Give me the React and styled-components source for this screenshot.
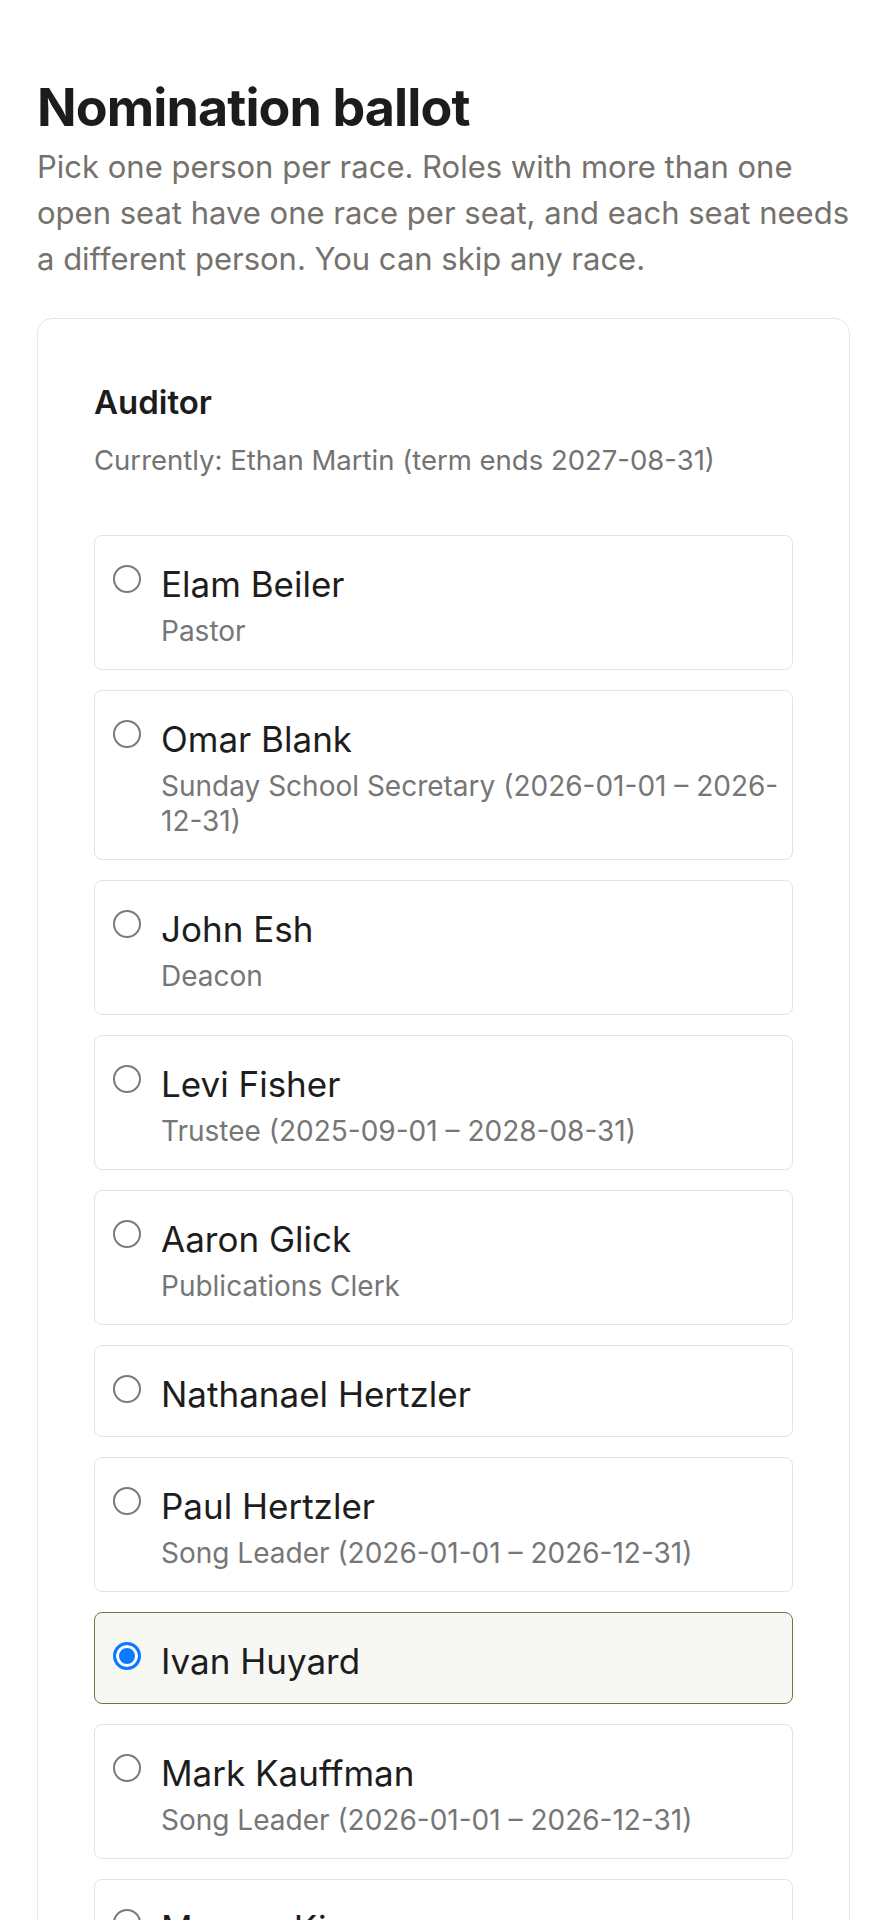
import { useState } from "react";
import styled, { createGlobalStyle } from "styled-components";

const GlobalStyle = createGlobalStyle`
  * {
    box-sizing: border-box;
  }
  body {
    margin: 0;
    background: #ffffff;
    font-family: Inter, "Noto Sans", "Liberation Sans", sans-serif;
    color: #1f1f1f;
  }
`;

const Page = styled.main`
  padding: 80px 37px 40px;
`;

const Title = styled.h1`
  margin: 0;
  font-size: 52px;
  line-height: 56px;
  font-weight: 700;
  letter-spacing: -0.9px;
  color: #1c1c1c;
`;

const Intro = styled.p`
  margin: 8px 0 36px;
  font-size: 31px;
  line-height: 46px;
  color: #75726d;
`;

const Card = styled.section`
  border: 1.5px solid #e6e6e6;
  border-radius: 15px;
  padding: 63px 56px 40px;
`;

const RaceTitle = styled.h2`
  margin: 0;
  font-size: 33px;
  line-height: 40px;
  font-weight: 600;
  color: #1c1c1c;
`;

const Current = styled.div`
  margin-top: 20px;
  font-size: 27.5px;
  line-height: 37px;
  color: #737373;
`;

const Options = styled.div`
  margin-top: 56px;
  display: flex;
  flex-direction: column;
  gap: 20px;
`;

const Option = styled.label`
  display: flex;
  align-items: flex-start;
  gap: 20px;
  padding: 26px 8px 20px 18px;
  border: 1.5px solid ${(p) => (p.$active ? "#6b7a45" : "#e3e3e3")};
  border-radius: 8px;
  background: ${(p) => (p.$active ? "#f7f7f4" : "#ffffff")};
  cursor: pointer;
`;

const Radio = styled.input.attrs({ type: "radio" })`
  appearance: none;
  flex: none;
  width: 28px;
  height: 28px;
  margin: 3px 0 0;
  border-radius: 50%;
  border: 2px solid #7a7a7a;
  background: #ffffff;

  &:checked {
    border: 3px solid #0a7aff;
    background: #0a7aff;
    box-shadow: inset 0 0 0 3px #ffffff;
  }
`;

const Text = styled.div`
  display: flex;
  flex-direction: column;
  gap: 8px;
  min-width: 0;
`;

const Name = styled.span`
  font-size: 35px;
  line-height: 44px;
  color: #1d1d1d;
`;

const Role = styled.span`
  font-size: 28px;
  line-height: 35px;
  color: #767676;
`;

// the zero-width space lets the long date range wrap after its hyphen
const candidates = [
  { id: 1, name: "Elam Beiler", role: "Pastor" },
  { id: 2, name: "Omar Blank", role: "Sunday School Secretary (2026-01-01 – 2026-\u200B12-31)" },
  { id: 3, name: "John Esh", role: "Deacon" },
  { id: 4, name: "Levi Fisher", role: "Trustee (2025-09-01 – 2028-08-31)" },
  { id: 5, name: "Aaron Glick", role: "Publications Clerk" },
  { id: 6, name: "Nathanael Hertzler" },
  { id: 7, name: "Paul Hertzler", role: "Song Leader (2026-01-01 – 2026-12-31)" },
  { id: 8, name: "Ivan Huyard" },
  { id: 9, name: "Mark Kauffman", role: "Song Leader (2026-01-01 – 2026-12-31)" },
  { id: 10, name: "Marcus King", role: "Usher" },
];

export default function App() {
  const [picked, setPicked] = useState(8);

  return (
    <>
      <GlobalStyle />
      <Page>
        <Title>Nomination ballot</Title>
        <Intro>
          Pick one person per race. Roles with more than one open seat have one
          race per seat, and each seat needs a different person. You can skip
          any race.
        </Intro>
        <Card>
          <RaceTitle>Auditor</RaceTitle>
          <Current>Currently: Ethan Martin (term ends 2027-08-31)</Current>
          <Options>
            {candidates.map((c) => (
              <Option key={c.id} $active={picked === c.id}>
                <Radio
                  name="auditor"
                  checked={picked === c.id}
                  onChange={() => setPicked(c.id)}
                />
                <Text>
                  <Name>{c.name}</Name>
                  {c.role && <Role>{c.role}</Role>}
                </Text>
              </Option>
            ))}
          </Options>
        </Card>
      </Page>
    </>
  );
}
